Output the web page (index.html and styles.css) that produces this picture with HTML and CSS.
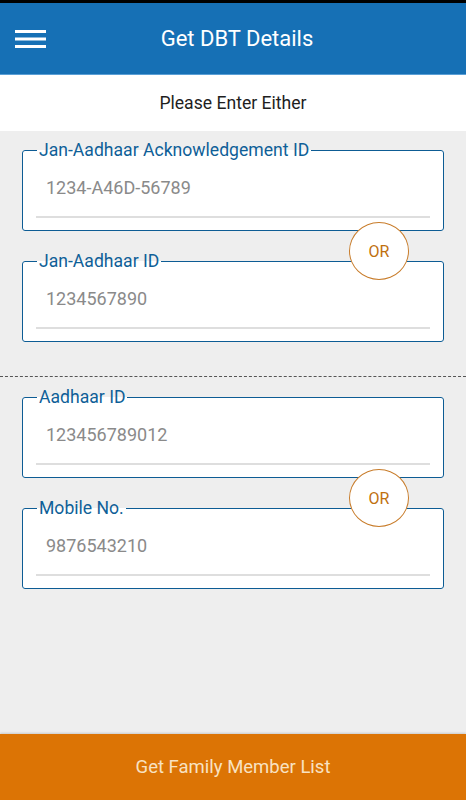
FILE: index.html
```html
<!DOCTYPE html>
<html>
<head>
<meta charset="utf-8">
<link rel="stylesheet" href="styles.css">
</head>
<body>
<div class="app">
  <div class="statusbar"></div>
  <header class="topbar">
    <button class="menu" aria-label="Menu">
      <svg width="31" height="20" viewBox="0 0 31 20"><rect x="0" y="1" width="31" height="3" fill="#fff"/><rect x="0" y="8.5" width="31" height="3" fill="#fff"/><rect x="0" y="16" width="31" height="3" fill="#fff"/></svg>
    </button>
    <h1 class="title">Get DBT Details</h1>
  </header>
  <div class="subhead">Please Enter Either</div>
  <main class="content">
    <section class="group">
      <fieldset class="field">
        <legend>Jan-Aadhaar Acknowledgement ID</legend>
        <div class="input">1234-A46D-56789</div>
      </fieldset>
      <div class="or-row"><span class="or">OR</span></div>
      <fieldset class="field">
        <legend>Jan-Aadhaar ID</legend>
        <div class="input">1234567890</div>
      </fieldset>
    </section>
    <hr class="divider">
    <section class="group">
      <fieldset class="field">
        <legend>Aadhaar ID</legend>
        <div class="input">123456789012</div>
      </fieldset>
      <div class="or-row"><span class="or">OR</span></div>
      <fieldset class="field">
        <legend>Mobile No.</legend>
        <div class="input">9876543210</div>
      </fieldset>
    </section>
  </main>
  <button class="submit">Get Family Member List</button>
</div>
</body>
</html>
```

FILE: styles.css
```css
* { box-sizing: border-box; }
html, body { margin: 0; padding: 0; }
body {
  font-family: Roboto, "Liberation Sans", sans-serif;
  background: #eeeeee;
}
.app {
  width: 466px;
  height: 800px;
  display: flex;
  flex-direction: column;
  background: #eeeeee;
}
.statusbar {
  height: 3px;
  background: #000;
}
.topbar {
  height: 72px;
  background: #1670b5;
  border-bottom: 1px solid #5a9fd6;
  display: flex;
  align-items: center;
  position: relative;
}
.menu {
  background: none;
  border: 0;
  padding: 0;
  margin-left: 15px;
  width: 31px;
  height: 20px;
  display: flex;
}
.title {
  flex: 1;
  margin: 0 0 0 -38px;
  text-align: center;
  color: #fff;
  font-weight: 400;
  font-size: 22px;
  line-height: 26px;
  padding-top: 1px;
}
.subhead {
  height: 56px;
  background: #fff;
  display: flex;
  align-items: center;
  justify-content: center;
  font-size: 17.6px;
  color: #1e1e1e;
}
.content {
  flex: 1;
  padding: 9px 22px 0 22px;
}
.group {
  position: relative;
}
.field {
  margin: 0;
  border: 1.5px solid #0d5c94;
  border-radius: 3px;
  background: #fff;
  padding: 0 13px 12px 13px;
  min-width: 0;
}
.field legend {
  padding: 0 2px;
  margin-left: 1px;
  font-size: 17.6px;
  line-height: 20px;
  color: #0f5f98;
}
.input {
  padding: 18px 0 0 10px;
  height: 58px;
  font-size: 18px;
  line-height: 20px;
  color: #8a8a8a;
  border-bottom: 2px solid #dedede;
}
.or-row {
  height: 20px;
  position: relative;
}
.or {
  position: absolute;
  left: 327px;
  top: -9px;
  width: 60px;
  height: 58px;
  border-radius: 50%;
  border: 1.5px solid #c87c2a;
  background: #fff;
  color: #c0700f;
  font-size: 16px;
  display: flex;
  align-items: center;
  justify-content: center;
  z-index: 2;
}
.divider {
  margin: 34px -22px 10px;
  border: 0;
  border-top: 1px dashed #555;
  height: 0;
}
.submit {
  height: 66px;
  border: 0;
  background: #dc7405;
  color: #f8e2c2;
  font-family: Roboto, "Liberation Sans", sans-serif;
  font-size: 18.5px;
  box-shadow: 0 -1px 2px rgba(0,0,0,0.15);
  padding: 0;
}
```
